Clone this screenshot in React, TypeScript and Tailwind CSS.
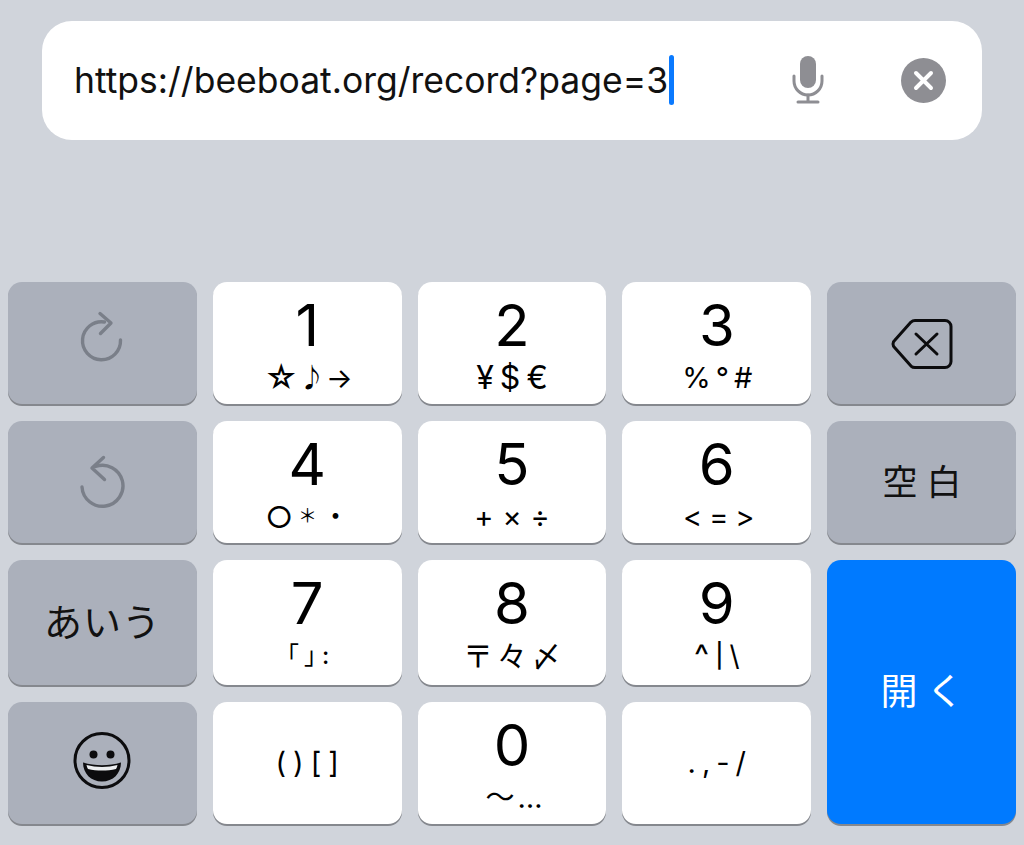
import type { ReactNode } from 'react';

const SANS = "font-['Inter','Noto_Sans_CJK_JP',sans-serif]";

type NumKey = { id: string; digit?: string; sub: ReactNode };

const numberKeys: NumKey[][] = [
  [
    {
      id: '1',
      digit: '1',
      sub: (
        <span className="flex items-center pl-[3px]">
          <span className="text-[32px]">☆</span>
          <span className="ml-[1px] text-[26px]">{'♪\uFE0E'}</span>
          <span className="ml-[1px] text-[28px]">→</span>
        </span>
      ),
    },
    { id: '2', digit: '2', sub: <span className="pl-[6px] text-[32px] tracking-[6px]">¥$€</span> },
    { id: '3', digit: '3', sub: <span className="pl-[6px] text-[29px] tracking-[5px]">%°#</span> },
  ],
  [
    {
      id: '4',
      digit: '4',
      sub: (
        <span className="flex items-center gap-[5px]">
          <span className="text-[30px]">○</span>
          <span className="text-[19px]">＊</span>
          <span className="text-[27px]">・</span>
        </span>
      ),
    },
    { id: '5', digit: '5', sub: <span className="pl-[9px] text-[29px] tracking-[9px]">+×÷</span> },
    { id: '6', digit: '6', sub: <span className="pl-[11px] text-[29px] tracking-[7px]">{'<=>'}</span> },
  ],
  [
    {
      id: '7',
      digit: '7',
      sub: (
        <span className="flex items-center pl-[2px] text-[24px] [font-feature-settings:'halt']">
          <span>「</span>
          <span className="ml-[5px]">」</span>
          <span className="ml-[6px] font-medium">:</span>
        </span>
      ),
    },
    { id: '8', digit: '8', sub: <span className="pl-[4px] text-[30px] tracking-[4px]">〒々〆</span> },
    {
      id: '9',
      digit: '9',
      sub: (
        <span className="flex items-center gap-[6px]">
          <span className="text-[32px]">^</span>
          <span className="text-[24px] font-medium">|</span>
          <span className="text-[28px]">\</span>
        </span>
      ),
    },
  ],
  [
    { id: 'brackets', sub: <span className="pl-[7px] text-[29px] tracking-[7px]">()[]</span> },
    { id: '0', digit: '0', sub: <span className="pl-[7px] text-[29px] tracking-[3px]">〜…</span> },
    { id: 'punct', sub: <span className="pl-[6px] text-[29px] tracking-[6px]">.,-/</span> },
  ],
];

function NumberKey({ digit, sub }: NumKey) {
  return (
    <div className="flex flex-col items-center rounded-[14px] bg-white text-black shadow-[0_2px_0_#85888e]">
      {digit ? (
        <>
          <span className="mt-[14px] h-[58px] text-[58px] leading-[58px]">{digit}</span>
          <span className="mt-[7px] flex h-[34px] items-center leading-[34px]">{sub}</span>
        </>
      ) : (
        <span className="my-auto flex items-center leading-[34px]">{sub}</span>
      )}
    </div>
  );
}

function GrayKey({ children }: { children: ReactNode }) {
  return (
    <div className="flex items-center justify-center rounded-[14px] bg-[#abb0bb] text-[#111] shadow-[0_2px_0_#85888e]">
      {children}
    </div>
  );
}

// icon viewBoxes are in page coordinates, measured off the screenshot
function RedoIcon() {
  return (
    <svg width="48" height="64" viewBox="78.500 311 48 64" fill="none" stroke="#7a7f89" strokeWidth="3.400" strokeLinecap="round" strokeLinejoin="round">
      <path d="M105 322A19 19 0 1 0 121 340" />
      <path d="M100.500 313.500L111.500 323L101 333.500" />
    </svg>
  );
}

function UndoIcon() {
  return (
    <svg width="48" height="64" viewBox="78.500 450 48 64" fill="none" stroke="#7a7f89" strokeWidth="3.400" strokeLinecap="round" strokeLinejoin="round">
      <path d="M96 466.500A20.500 20.500 0 1 1 82.500 487" />
      <path d="M104 457.500L92.500 468L105 479.500" />
    </svg>
  );
}

function DeleteIcon() {
  return (
    <svg width="64" height="54" viewBox="890 316 64 54" fill="none" stroke="#0c0c0e" strokeWidth="3" strokeLinecap="round" strokeLinejoin="round">
      <path d="M915 320.500h30a6 6 0 0 1 6 6v35a6 6 0 0 1-6 6h-30a6 6 0 0 1-4-1.500L895 348a5 5 0 0 1 0-8l16-18a6 6 0 0 1 4-1.500z" />
      <path d="M916 334l21 20M937 334l-21 20" />
    </svg>
  );
}

function SmileIcon() {
  return (
    <svg className="mb-[3px]" width="58" height="58" viewBox="74.500 732.500 58 58">
      <circle cx="103.500" cy="761" r="27" fill="none" stroke="#0c0c0e" strokeWidth="3" />
      <circle cx="95" cy="755" r="4" fill="#0c0c0e" />
      <circle cx="112" cy="755" r="4" fill="#0c0c0e" />
      <path d="M84.500 763c12 3.500 26 3.500 38 0 0 11-8 19-19 19s-19-8-19-19z" fill="#0c0c0e" />
      <path d="M88 765.500c10 2.500 21 2.500 31 0-.3 1.500-.8 3-1.500 4-9 2-19 2-28 0-.7-1-1.200-2.500-1.500-4z" fill="#eceef0" />
    </svg>
  );
}

function MicIcon() {
  return (
    <svg className="mb-[1px]" width="32" height="48" viewBox="0 0 32 48" fill="none" stroke="#8e8e93" strokeWidth="3" strokeLinecap="round">
      <rect x="8" y="0" width="16" height="32" rx="8" fill="#8e8e93" stroke="none" />
      <path d="M2 20v5a14 14 0 0 0 28 0v-5" />
      <path d="M16 39v7M6 46h20" />
    </svg>
  );
}

function ClearIcon() {
  return (
    <svg width="45" height="45" viewBox="0 0 45 45">
      <circle cx="22.500" cy="22.500" r="22.500" fill="#8e8e93" />
      <path d="M15 15l15 15M30 15L15 30" stroke="#fff" strokeWidth="4" strokeLinecap="round" />
    </svg>
  );
}

export default function App() {
  return (
    <div className={`flex h-[845px] w-[1024px] flex-col overflow-hidden bg-[#d0d4db] px-[8px] pt-[21px] ${SANS}`}>
      <div className="mx-[34px] flex h-[119px] items-center rounded-[30px] bg-white pl-[32px] pr-[36px]">
        <span className="text-[35.500px] leading-[44px] text-[#111]">https://beeboat.org/record?page=3</span>
        <span className="mb-[2px] ml-[1px] h-[50px] w-[5px] rounded-full bg-[#0a7aff]" />
        <span className="ml-auto flex items-center gap-[77px]">
          <MicIcon />
          <ClearIcon />
        </span>
      </div>

      <div className="mt-[142px] grid grid-cols-5 grid-rows-[122px_122px_124.5px_122px] gap-x-[16px] gap-y-[17px]">
        <GrayKey><RedoIcon /></GrayKey>
        {numberKeys[0].map((k) => <NumberKey key={k.id} {...k} />)}
        <GrayKey><DeleteIcon /></GrayKey>

        <GrayKey><UndoIcon /></GrayKey>
        {numberKeys[1].map((k) => <NumberKey key={k.id} {...k} />)}
        <GrayKey><span className="pl-[10px] text-[35px] tracking-[9px]">空白</span></GrayKey>

        <GrayKey><span className="text-[38px] tracking-[1px]">あいう</span></GrayKey>
        {numberKeys[2].map((k) => <NumberKey key={k.id} {...k} />)}
        <div className="row-span-2 flex items-center justify-center rounded-[14px] bg-[#007aff] pl-[10px] text-[37px] tracking-[9px] text-white shadow-[0_2px_0_#85888e]">
          開く
        </div>

        <GrayKey><SmileIcon /></GrayKey>
        {numberKeys[3].map((k) => <NumberKey key={k.id} {...k} />)}
      </div>
    </div>
  );
}
